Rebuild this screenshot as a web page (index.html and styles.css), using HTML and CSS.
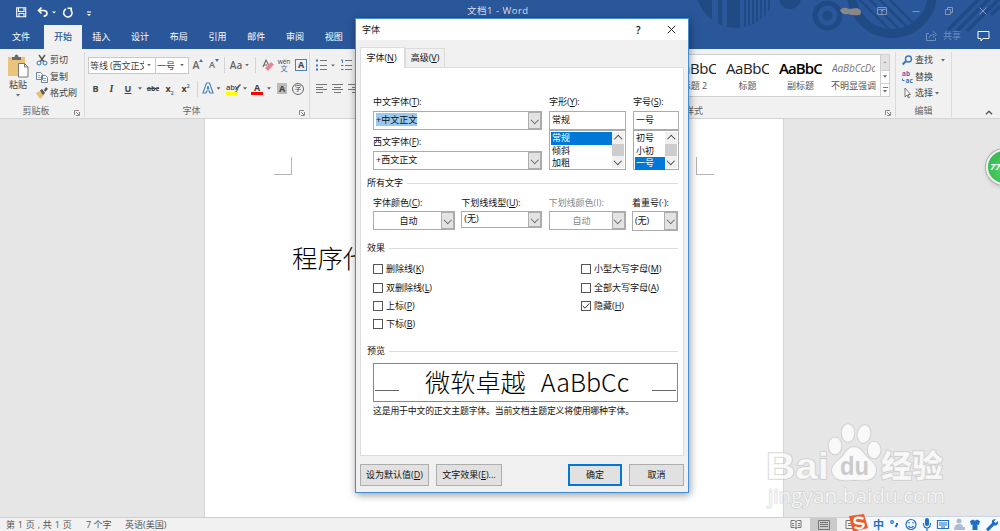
FILE: index.html
```html
<!DOCTYPE html>
<html lang="zh-CN">
<head>
<meta charset="utf-8">
<title>文档1 - Word</title>
<link rel="stylesheet" href="styles.css">
</head>
<body>
<div class="app">
  <header class="header">
    <svg class="pattern" width="320" height="49" viewBox="680 0 320 49">
      <defs>
        <clipPath id="disc"><circle cx="736" cy="-12" r="40"/></clipPath>
        <clipPath id="dial"><circle cx="892" cy="-7" r="36"/></clipPath>
      </defs>
      <g fill="#204a84" clip-path="url(#disc)">
        <rect x="696" width="16" height="40"/><rect x="718" width="4" height="40"/><rect x="727" width="13" height="40"/><rect x="744" width="2" height="40"/><rect x="748" width="2" height="40"/><rect x="752" width="2" height="40"/><rect x="756" width="2" height="40"/><rect x="760" width="2" height="40"/><rect x="764" width="2" height="40"/><rect x="768" width="2" height="40"/>
      </g>
      <g fill="none" stroke="#204a84">
        <circle cx="790" cy="-2" r="11" fill="#204a84" stroke="none"/>
        <circle cx="827.500" cy="15.500" r="12.500" stroke-width="5"/>
        <circle cx="827.500" cy="15.500" r="5" fill="#204a84" stroke="none"/>
        <circle cx="892" cy="-7" r="40.500" stroke-width="9"/>
        <path clip-path="url(#dial)" d="M850-10l50 50M858-12l50 50M866-14l50 50M874-16l50 50" stroke-width="2.500"/>
        <path d="M948 30L980-2M957 31L990-2M967 31L1000-2M991 15L1000 6" stroke-width="3.500"/>
      </g>
    </svg>
    <div class="titlebar">
      <svg class="qat" width="80" height="22" viewBox="0 0 80 22" fill="none" stroke="#fff" stroke-width="1.100">
        <path d="M.700 7.700h9v9h-9zM2.500 8v3.500h5.500V8M3 16.500v-3h5v3"/>
        <path d="M25.500 7.500l-3 3 3 3M23 10.500h4.500q3.500 0 3.500 2.800t-3.500 3" stroke-width="1.600"/>
        <path d="M36 11.500h4l-2 2zM71 14h4l-2 2z" fill="#fff" stroke="none"/>
        <path d="M50 9a4.200 4.200 0 1 0 4.500.5M51.500 8.200h4.500M55.300 7.500v4" stroke-width="1.500"/>
        <path d="M71 12h4"/>
      </svg>
      <div class="doc-title">文档1 - Word</div>
      <svg class="window-tools" width="160" height="24" viewBox="840 0 160 24" fill="none" stroke="#8195b9">
        <path d="M840 10q4-4 9-1l8-1q6 2 3 7-7 1-12-1-7 1-8-4z" fill="#8b8787" stroke="none"/>
        <path d="M877.500 7.500h9v7h-9zM877.500 9.500h9M882 14v-4M880.500 11.500l1.500-1.500 1.500 1.500"/>
        <path d="M912.500 11.500h7M945.500 9.500h5v5h-5zM947.500 9V7.500h5v5H951M979.500 7.500l7 7M986.500 7.500l-7 7"/>
      </svg>
    </div>
    <nav class="tabs">
      <span class="tab first">文件</span><span class="tab active">开始</span><span class="tab">插入</span><span class="tab">设计</span><span class="tab">布局</span><span class="tab">引用</span><span class="tab">邮件</span><span class="tab">审阅</span><span class="tab">视图</span>
      <div class="share">
        <svg width="12" height="12" viewBox="0 0 12 12" fill="none" stroke="#6f8fc0"><path d="M3 3.500H.5v7h9V8M3 8q.5-3.500 5-3.500M7 1.500l3.500 3L7 7.500"/></svg>
        <span>共享</span>
        <svg class="comment" width="13" height="12" viewBox="0 0 13 12" fill="none" stroke="#fff"><path d="M1 1.500h11v7H6L4 11V8.500H1z"/></svg>
      </div>
    </nav>
  </header>

  <section class="ribbon">
    <div class="group clipboard">
      <div class="group-main">
        <div class="paste">
          <svg width="22" height="24" viewBox="0 0 22 24"><path d="M1 3h17v19H1z" fill="#ecc37b"/><path d="M5 3h2.500q0-2.500 2-2.500t2 2.500H14v3H5z" fill="#6a6a6a"/><path d="M11.500 9.500h6l3.500 3.500v10h-9.500z" fill="#fff" stroke="#777"/><path d="M17.500 9.500V13H21" fill="none" stroke="#777"/></svg>
          <span>粘贴</span><i class="caret"></i>
        </div>
        <div class="commands">
          <div class="command"><svg width="12" height="12" viewBox="0 0 12 12" fill="none"><path d="M3 1l5 7M9 1L4 8" stroke="#555" stroke-width="1.400"/><circle cx="3" cy="9" r="2" stroke="#3876b5"/><circle cx="9" cy="9" r="2" stroke="#3876b5"/></svg>剪切</div>
          <div class="command"><svg width="12" height="12" viewBox="0 0 12 12" fill="#fff" stroke="#6884a2"><path d="M.500 1.500h4l2 2v5h-6zM5.500 4.500h4l2 2v5h-6z"/><path d="M2 4.500h2M2 6.500h3M7 7.500h3M7 9.500h3" stroke-width=".7"/></svg>复制</div>
          <div class="command"><svg width="12" height="12" viewBox="0 0 12 12"><path d="M0 6l4-2 4 4-4 4z" fill="#e9bd72"/><path d="M4 3.500l2-1.500 3 4-2 2zM8 3l2-3 2 2-3 3z" fill="#555"/></svg>格式刷</div>
        </div>
      </div>
      <div class="group-label">剪贴板<svg class="launcher" width="6" height="6" viewBox="0 0 6 6" fill="none" stroke="#888"><path d="M.5 5V.5H5M2 2l3 3M5.500 2v3.500H2"/></svg></div>
    </div>

    <div class="group font-group">
      <div class="group-main stacked">
        <div class="tool-row row-one">
          <div class="select"><span>等线 (西文正文)</span><i class="caret"></i></div>
          <div class="select"><span>一号</span><i class="caret"></i></div>
          <b class="glyph grow">A<svg width="4" height="3"><path d="M0 3l2-3 2 3z" fill="#3876b5"/></svg></b>
          <b class="glyph shrink">A<svg width="4" height="3"><path d="M0 0h4L2 3z" fill="#3876b5"/></svg></b>
          <i class="rule"></i><span class="glyph case">Aa</span><i class="caret"></i><i class="rule"></i>
          <svg width="12" height="12" viewBox="0 0 12 12"><path d="M1 8l3-7 2.500 5M2 6h3" fill="none" stroke="#666" stroke-width="1.100"/><path d="M3 9l6-6 3 2.500L6 12z" fill="#e8849a"/></svg>
          <span class="pinyin">wén<em>文</em></span>
          <b class="boxed">A</b>
        </div>
        <div class="tool-row row-two">
          <b class="glyph">B</b><b class="glyph italic">I</b><b class="glyph under">U</b><i class="caret"></i><b class="glyph strike">abc</b>
          <b class="glyph">x<sub>2</sub></b><b class="glyph">x<sup>2</sup></b><i class="rule"></i>
          <svg width="12" height="13" viewBox="0 0 12 13" fill="#fff" stroke="#4c81bb" stroke-width="1.200"><path d="M1 11L4.500 1h3L11 11H8L7.500 9h-3L4 11zM5.300 7h1.500L6 4z"/></svg><i class="caret"></i>
          <span class="mark">aby<svg width="8" height="8" viewBox="0 0 8 8"><path d="M1 7l1-2 4-4 1 1-4 4z" fill="#555"/></svg></span><i class="caret"></i>
          <b class="color-a">A</b><i class="caret"></i><b class="shaded">A</b><span class="circled">字</span>
        </div>
      </div>
      <div class="group-label">字体<svg class="launcher" width="6" height="6" viewBox="0 0 6 6" fill="none" stroke="#888"><path d="M.5 5V.5H5M2 2l3 3M5.500 2v3.500H2"/></svg></div>
    </div>

    <div class="group paragraph">
      <svg width="46" height="48" viewBox="310 52 46 48" fill="none" stroke="#777">
        <path d="M320 60.500h7M320 65.500h7M320 69.500h7M345 60.500h7M345 65.500h7M345 69.500h7"/>
        <path d="M316 60.500h2M316 65.500h2M316 69.500h2" stroke="#3876b5" stroke-width="2"/>
        <path d="M341 60h1.500v3M341 65.500h2.500M341 69.500h2.500" stroke="#3876b5"/>
        <path d="M331 64.500h4l-2 2z" fill="#666" stroke="none"/>
        <path d="M316 84.500h11M316 87.500h7M316 89.500h11M316 92.500h7M332 84.500h11M334 87.500h7M332 89.500h11M334 92.500h7M348 84.500h11M352 87.500h7M348 89.500h11M352 92.500h7"/>
      </svg>
    </div>

    <div class="group styles">
      <div class="gallery">
        <div class="style-item"><span>AaBbC</span><small>标题 2</small></div>
        <div class="style-item"><span>AaBbC</span><small>标题</small></div>
        <div class="style-item strong"><span>AaBbC</span><small>副标题</small></div>
        <div class="style-item subtle"><span>AaBbCcDd</span><small>不明显强调</small></div>
        <div class="gallery-scroll"><i class="caret up"></i><i class="caret"></i><div class="more"><i class="caret"></i></div></div>
      </div>
      <div class="group-label">样式<svg class="launcher" width="6" height="6" viewBox="0 0 6 6" fill="none" stroke="#888"><path d="M.5 5V.5H5M2 2l3 3M5.500 2v3.500H2"/></svg></div>
    </div>

    <div class="group editing">
      <div class="commands">
        <div class="command"><svg width="11" height="11" viewBox="0 0 11 11" fill="none" stroke="#3876b5"><circle cx="6.500" cy="4" r="3" stroke-width="1.400"/><path d="M4 6L.7 9.500" stroke-width="2"/></svg>查找<i class="caret wide"></i></div>
        <div class="command"><svg class="replace" width="11" height="14" viewBox="0 0 11 14"><text x="0" y="6" fill="#8a54a8">ab</text><text x="3.500" y="12.500" fill="#3876b5">ac</text><path d="M.5 8.500v2h2" fill="none" stroke="#3876b5"/></svg>替换</div>
        <div class="command"><svg width="11" height="12" viewBox="0 0 11 12" fill="#fff" stroke="#777"><path d="M3 1v9l2-2 1.500 3 1-.5L6 7.500h2.500z"/></svg>选择<i class="caret"></i></div>
      </div>
      <div class="group-label">编辑</div>
    </div>
    <svg class="collapse" width="8" height="5" viewBox="0 0 8 5" fill="none" stroke="#555" stroke-width="1.400"><path d="M1 4.200l3-3 3 3"/></svg>
  </section>

  <main class="workspace">
    <article class="page">
      <div class="corners"><i class="corner left"></i><i class="corner right"></i></div>
      <p class="body-text">程序代</p>
    </article>
  </main>

  <footer class="status">
    <span class="pages">第 1 页 , 共 1 页</span><span class="words">7 个字</span><span>英语(美国)</span>
    <div class="views">
      <svg width="12" height="9" viewBox="0 0 12 9" fill="none" stroke="#777"><path d="M1 .5h3.500L6 1.500 7.500.5H11v7H7.500L6 8.500 4.500 7.500H1zM6 1v8M2 3.500h2M2 5.500h2M8 3.500h2M8 5.500h2"/></svg>
      <span class="view-on"><svg width="12" height="10" viewBox="0 0 12 10" fill="none" stroke="#777"><path d="M.5.500h11v9H.500zM2 2.500h8M2 4.500h8M2 6.500h8"/></svg></span>
      <svg width="12" height="9" viewBox="0 0 12 9" fill="none" stroke="#777"><path d="M1 .5h10v8H1zM3 3.500h5M3 5.500h5"/></svg>
    </div>
  </footer>
</div>

<svg class="watermark" width="190" height="96" viewBox="760 418 190 96">
  <g fill="#fff" fill-opacity=".75" stroke="#bdbdbd" stroke-opacity=".6" stroke-width="1.600" paint-order="stroke">
    <text x="766" y="479" font-size="37" font-weight="700" textLength="63" lengthAdjust="spacingAndGlyphs">Bai</text>
    <ellipse cx="835" cy="446" rx="6.500" ry="8.500"/><ellipse cx="848" cy="433" rx="6.500" ry="9"/><ellipse cx="864" cy="434" rx="6.500" ry="9" transform="rotate(12 864 434)"/><ellipse cx="874" cy="450" rx="6.500" ry="8.500"/>
    <path d="M854 447c7 0 9 6 14 11 5 4 9 8 8 14-2 9-11 9-22 8-11 1-20 1-22-8-1-6 4-10 9-14 5-5 6-11 13-11z"/>
    <text x="881" y="477" font-size="31" font-weight="900" textLength="62">经验</text>
    <text class="site" x="768" y="503" font-size="20" textLength="177" lengthAdjust="spacingAndGlyphs" stroke-width="1.200">jingyan.baidu.com</text>
  </g>
  <text x="840" y="475" font-size="25" font-weight="700" fill="#cbcbcb" textLength="29" lengthAdjust="spacingAndGlyphs">du</text>
</svg>

<div class="ime">
  <svg width="152" height="17" viewBox="848 514 152 17">
    <path d="M860 516.500h140v15H852z" fill="#f6faff"/><path d="M866 516.500h134" stroke="#c9d5e2"/>
    <path d="M849 516l15-2 4 14-15 4z" fill="#f05a28"/><path d="M863.500 518.500q-8-2-9 1.500t5.500 3.500 1.500 4.500q-3 1.500-7-1" fill="none" stroke="#fff" stroke-width="2.400"/>
    <text x="873" y="528.500" font-size="11" font-weight="700" fill="#1d70c8">中</text>
    <g fill="none" stroke="#1d70c8" stroke-width="1.200">
      <circle cx="892" cy="522" r="1.300"/><path d="M897 523v1.500l-1.500 2.500" stroke-width="2"/>
      <circle cx="911" cy="524.500" r="5"/><path d="M909 522v1.500M913 522v1.500M908.500 526q2.500 3 5 0"/>
      <path d="M923.500 523q0 5 3.500 5t3.500-5M927 528v3"/>
      <path d="M937.500 520.500h11v8h-11zM939 523h8M939 525h8M941 527h4"/>
    </g>
    <g fill="#1d70c8"><rect x="925" y="518" width="4" height="8" rx="2"/><path d="M970 521l3-1.500q2 2 4 0l3 1.500-1 4-1.500-.5v5.500h-5v-5.500l-1.500.5zM986 529l6-6q-1-4 4-4l-2 2.500 1.500 1.500 2.500-2q.5 5-4 4.500l-6 6z"/></g>
    <g fill="#aebcd2"><circle cx="959" cy="521" r="2.500"/><path d="M954 530q0-6 5-6 4 0 4 3h2v3z"/></g>
  </svg>
</div>
<div class="ball">77</div>

<div class="dialog">
  <div class="dialog-title"><span>字体</span><b>?</b><svg width="9" height="9" viewBox="0 0 9 9" stroke="#222"><path d="M.8.8l7.400 7.400M8.200.8L.8 8.200"/></svg></div>
  <div class="dialog-tabs"><span class="dtab on">字体(<u>N</u>)</span><span class="dtab">高级(<u>V</u>)</span></div>
  <div class="panel">
    <div class="font-fields">
      <div class="families">
        <label>中文字体(<u>T</u>):</label>
        <div class="combo"><span class="selected">+中文正文</span><i class="drop"></i></div>
        <label class="second">西文字体(<u>F</u>):</label>
        <div class="combo"><span>+西文正文</span><i class="drop"></i></div>
      </div>
      <div class="picker">
        <label>字形(<u>Y</u>):</label>
        <div class="combo">常规</div>
        <div class="list"><ul><li class="hit">常规</li><li>倾斜</li><li>加粗</li></ul><div class="scroll"><i class="arrow up"></i><i class="thumb"></i><i class="arrow"></i></div></div>
      </div>
      <div class="picker">
        <label>字号(<u>S</u>):</label>
        <div class="combo">一号</div>
        <div class="list"><ul><li>初号</li><li>小初</li><li class="hit">一号</li></ul><div class="scroll"><i class="arrow up"></i><i class="thumb"></i><i class="arrow"></i></div></div>
      </div>
    </div>
    <div class="section">所有文字</div>
    <div class="text-fields">
      <div><label>字体颜色(<u>C</u>):</label><div class="combo centered"><span>自动</span><i class="drop"></i></div></div>
      <div><label>下划线线型(<u>U</u>):</label><div class="combo short"><span>(无)</span><i class="drop"></i></div></div>
      <div class="disabled"><label>下划线颜色(I):</label><div class="combo centered"><span>自动</span><i class="drop"></i></div></div>
      <div><label>着重号(·):</label><div class="combo tall"><span>(无)</span><i class="drop"></i></div></div>
    </div>
    <div class="section effects-title">效果</div>
    <div class="effects">
      <div><p><i class="check"></i>删除线(<u>K</u>)</p><p><i class="check"></i>双删除线(<u>L</u>)</p><p><i class="check"></i>上标(<u>P</u>)</p><p><i class="check"></i>下标(<u>B</u>)</p></div>
      <div><p><i class="check"></i>小型大写字母(<u>M</u>)</p><p><i class="check"></i>全部大写字母(<u>A</u>)</p><p><i class="check"><svg width="8" height="8" viewBox="0 0 8 8" fill="none" stroke="#333"><path d="M.8 4l2.200 2.200L7.300 1.500"/></svg></i>隐藏(<u>H</u>)</p></div>
    </div>
    <div class="section preview-title">预览</div>
    <div class="preview"><i></i><span class="sample">微软卓越</span><span class="sample latin">AaBbCc</span><i></i></div>
    <div class="hint">这是用于中文的正文主题字体。当前文档主题定义将使用哪种字体。</div>
  </div>
  <div class="buttons"><span class="btn default-btn">设为默认值(<u>D</u>)</span><span class="btn effect-btn">文字效果(<u>E</u>)...</span><span class="btn ok">确定</span><span class="btn cancel">取消</span></div>
</div>
</body>
</html>
```
FILE: styles.css
```css
* { box-sizing: border-box; }
body { margin: 0; width: 1000px; height: 531px; overflow: hidden; position: relative; font: 9px/12px "Open Sans", "Noto Sans CJK SC", sans-serif; color: #444; }
i, em { font-style: normal; }
svg { display: block; flex: none; }
p, ul { margin: 0; padding: 0; list-style: none; }
u { text-underline-offset: 1px; text-decoration-thickness: 1px; }
.app { display: flex; flex-direction: column; height: 531px; }

/* Title bar and ribbon tabs */
.header { position: relative; height: 49px; background: #2a579a; color: #fff; flex: none; }
.pattern { position: absolute; right: 0; top: 0; }
.titlebar { height: 25px; display: flex; position: relative; }
.qat { margin-left: 16px; }
.doc-title { margin-left: 371px; font-size: 9.5px; line-height: 21px; color: #d5deec; letter-spacing: .5px; white-space: nowrap; }
.window-tools { margin-left: auto; }
.tabs { display: flex; height: 24px; line-height: 23px; position: relative; }
.tab { width: 38.750px; text-align: center; }
.tab.first { width: 44px; padding-right: 2px; }
.tab.active { width: 38px; background: #f1f1f1; color: #2a579a; font-weight: 500; }
.share { margin-left: auto; display: flex; align-items: center; gap: 5px; color: #6f8fc0; padding-right: 10px; line-height: 20px; padding-bottom: 3px; }
.comment { margin-left: 11px; }

/* Ribbon */
.ribbon { height: 70px; flex: none; display: flex; background: #f1f1f1; border-bottom: 1px solid #d2d2d2; padding-top: 3px; }
.group { display: flex; flex-direction: column; position: relative; border-right: 1px solid #dadada; height: 65px; flex: none; }
.group-main { display: flex; height: 52px; }
.group-label { position: relative; height: 12px; margin-top: auto; text-align: center; color: #666; }
.launcher { position: absolute; right: 4px; bottom: 1px; }
.caret { width: 4px; height: 2.500px; background: #666; clip-path: polygon(0 0, 100% 0, 50% 100%); display: inline-block; flex: none; justify-self: center; align-self: center; }
.clipboard { width: 85px; }
.clipboard .group-label { padding-right: 12px; }
.paste { width: 36px; padding-top: 2px; display: flex; flex-direction: column; align-items: center; }
.paste span { line-height: 13px; }
.paste .caret { margin-top: 3px; }
.command { display: flex; align-items: center; height: 16.500px; gap: 2px; white-space: nowrap; }
.font-group { width: 225px; padding-left: 3px; }
.font-group .group-label { padding-right: 14px; }
.stacked { flex-direction: column; }
.tool-row { display: grid; align-items: center; justify-items: center; height: 23px; }
.row-one { height: 26px; grid-template-columns: 68px 33px 18px 14px 6px 18px 4px 13px 11px 22px 12px; }
.row-two { height: 21px; grid-template-columns: 15px 17px 16px 8px 18px 15px 17px 6px 16px 5px 22px 4px 20px 4px 22px 10px; }
.select { width: 100%; height: 17px; border: 1px solid #c8c8c8; background: #fff; display: flex; justify-content: space-between; padding: 0 4px 0 1px; line-height: 15px; }
.select span { white-space: nowrap; overflow: hidden; flex: 1; margin-right: 3px; letter-spacing: -.1px; }
.select + .select { border-left: 0; }
.select + .select span { letter-spacing: 0; }
.glyph { font-size: 9px; line-height: 12px; white-space: nowrap; }
.grow, .shrink { display: flex; font-size: 10.500px; font-weight: 600; color: #666; }
.shrink { font-size: 9px; }
.case { font-size: 10px; font-weight: 600; color: #666; }
.italic { font-style: italic; font-family: "Liberation Serif", serif; font-size: 10px; }
.under { text-decoration: underline; }
.strike { text-decoration: line-through; font-size: 7px; }
.glyph sub, .glyph sup { font-size: 5px; line-height: 0; color: #3876b5; }
.rule { width: 1px; height: 16px; background: #d4d4d4; }
.pinyin { font-size: 6.500px; line-height: 6px; text-align: center; display: grid; }
.pinyin em { color: #3876b5; font-size: 7px; line-height: 7px; }
.boxed { border: 1px solid #4c81bb; width: 12px; height: 12px; line-height: 10px; text-align: center; }
.mark { display: flex; font-size: 7.500px; font-weight: 600; line-height: 9px; height: 12px; width: 12px; border-bottom: 3px solid #ff0; }
.mark svg { margin-left: -5px; }
.color-a { line-height: 10px; height: 12px; width: 12px; text-align: center; border-bottom: 3px solid #f00; }
.shaded { width: 10px; height: 11px; background: #bbb; line-height: 11px; text-align: center; }
.circled { width: 12px; height: 12px; border: 1px solid #666; border-radius: 50%; font-size: 7px; line-height: 10px; text-align: center; }
.paragraph { width: 340px; }
.styles { width: 246px; }
.styles .group-label { width: 100%; text-align: right; padding-right: 192px; }
.gallery { display: flex; height: 43px; margin: 2px 5px 0 17px; background: #fff; border: 1px solid #cfcfcf; border-right: 0; }
.style-item { width: 53px; display: flex; flex-direction: column; align-items: center; padding-top: 3px; flex: none; }
.style-item span { width: 43px; overflow: hidden; white-space: nowrap; font: 15px/20px "Open Sans", sans-serif; letter-spacing: -.4px; color: #222; height: 21px; }
.style-item.strong span { font-weight: 600; color: #000; letter-spacing: -.900px; }
.style-item.subtle span { font-size: 10px; font-style: italic; color: #777; letter-spacing: -.1px; }
.style-item small { font-size: 9px; line-height: 14px; color: #555; }
.gallery-scroll { width: 11px; display: grid; grid-template-rows: 15px 13px 13px; border: 1px solid #cfcfcf; border-width: 0 1px; margin-left: auto; background: linear-gradient(#e2e2e2 15px, #cfcfcf 15px 16px, #fff 16px 28px, #cfcfcf 28px 29px, #fff 29px); }
.caret.up { transform: rotate(180deg); opacity: .4; }
.more { display: flex; flex-direction: column; align-items: center; padding-top: 4px; }
.more::before { content: ""; width: 5px; height: 1px; background: #777; margin-bottom: 2px; }
.more .caret { align-self: center; }
.editing { width: 56px; padding-left: 6px; }
.caret.wide { margin-left: 6px; }
.editing .group-label { margin-right: 6px; }
.replace { font: 700 6.500px "Open Sans", sans-serif; }
.collapse { margin: 58px 0 0 33px; }

/* Document */
.workspace { flex: 1; background: #e6e6e6; display: flex; }
.page { margin-left: 204px; width: 580px; background: #fff; border: 1px solid #d5d5d5; border-width: 0 1px; padding: 38px 69px 0 69px; }
.corners { display: flex; justify-content: space-between; }
.corner { width: 18px; height: 18px; border-bottom: 1px solid #b5b5b5; }
.corner.left { border-right: 1px solid #b5b5b5; }
.corner.right { border-left: 1px solid #b5b5b5; }
.body-text { font: 300 25.400px/36px "Noto Sans CJK SC", sans-serif; color: #000; margin: 64px 0 0 18px; }
.status { height: 14px; flex: none; background: #f1f1f1; border-top: 1px solid #cfcfcf; display: flex; padding-left: 6px; line-height: 14px; white-space: nowrap; color: #555; }
.pages { width: 80px; word-spacing: .5px; }
.words { width: 39px; }
.views { margin-left: auto; display: flex; width: 210px; align-items: center; }
.view-on { width: 27px; height: 14px; margin: 0 8px; background: #cacaca; display: grid; place-items: center; }

/* Floating overlays */
.watermark { position: absolute; left: 760px; top: 418px; font-family: "Liberation Sans", "Noto Sans CJK SC", sans-serif; }
.site { font-family: "Open Sans", sans-serif; }
.ime { position: absolute; left: 848px; top: 514px; font-family: "Noto Sans CJK SC", sans-serif; }
.ball { position: absolute; left: 986px; top: 149px; width: 36px; height: 36px; border-radius: 50%; border: 2px solid #eee; background: radial-gradient(circle at 50% 60%, #4fd264, #31b14b); box-shadow: 0 0 0 1px #aaa, 0 2px 4px #8886; color: #fff; font-size: 9.500px; font-weight: 700; font-style: italic; line-height: 31px; padding-left: 2px; }

/* Font dialog */
.dialog { position: absolute; left: 355px; top: 18px; width: 334px; height: 475px; background: #f0f0f0; border: 1px solid #3f8ed6; box-shadow: 1px 2px 8px #0006; color: #111; display: flex; flex-direction: column; padding: 0 4px; }
.dialog-title { height: 21px; flex: none; background: #fff; margin: 0 -4px; display: flex; align-items: center; padding: 0 12px 0 6px; }
.dialog-title b { margin-left: auto; font-size: 10px; font-weight: 600; width: 31px; }
.dialog-tabs { height: 27px; flex: none; padding-top: 7px; display: flex; align-items: flex-end; }
.dtab { width: 40px; height: 19px; border: 1px solid #dcdcdc; border-bottom: 0; line-height: 18px; text-align: center; }
.dtab.on { width: 45px; height: 21px; background: #fff; margin-bottom: -1px; z-index: 1; line-height: 19px; padding-right: 2px; }
.panel { width: 324px; height: 389px; flex: none; border: 1px solid #dcdcdc; background: #fff; padding: 28px 5px 0 6px; }
.font-fields { display: grid; grid-template-columns: 169px 77px 46px; gap: 7px; padding-left: 6px; }
label { display: block; height: 15px; line-height: 12px; white-space: nowrap; }
.combo { border: 1px solid #ababab; background: #fff; height: 19px; line-height: 16px; padding-left: 2px; display: flex; }
.selected { background: #99c9ef; height: 13px; line-height: 13px; margin-top: 1px; }
.drop { width: 13px; background: #e3e3e3; border: 1px solid #adadad; margin-left: auto; display: grid; place-items: center; }
.drop::after, .arrow::after { content: ""; width: 4.500px; height: 4.500px; border: solid #666; border-width: 0 1px 1px 0; transform: translateY(-1px) rotate(45deg); }
.arrow::after { border-color: #444; }
.second { height: 15px; margin-top: 6px; }
.list { height: 40px; border: 1px solid #ababab; display: flex; justify-content: space-between; padding: 1px; }
.list ul { flex: 1; }
.list li { height: 12.500px; line-height: 11px; padding-left: 1px; }
.list .hit { background: #0078d7; color: #fff; }
.scroll { width: 12px; background: #f0f0f0; display: grid; grid-template-rows: 12px 12px 12px; }
.arrow { display: grid; place-items: center; }
.arrow.up { transform: rotate(180deg); }
.thumb { background: #cdcdcd; }
.section { display: flex; align-items: center; gap: 4px; height: 12px; margin-top: 7px; white-space: nowrap; }
.section::after { content: ""; height: 1px; flex: 1; background: #dcdcdc; }
.text-fields { display: grid; grid-template-columns: 82px 81px 77px 46px; column-gap: 6.300px; padding-left: 6px; margin-top: 8px; height: 37px; }
.text-fields label { height: 14px; }
.combo.centered span { flex: 1; text-align: center; }
.combo.centered { line-height: 17px; }
.combo.short { height: 17px; line-height: 14px; }
.combo.tall { height: 20px; line-height: 18px; }
.disabled { color: #888; }
.effects-title { margin-top: 8px; }
.effects { display: grid; grid-template-columns: 208px 1fr; padding: 6px 0 0 6px; height: 85px; }
.effects p { height: 18.400px; display: flex; align-items: center; }
.check { width: 10px; height: 10px; border: 1px solid #555; margin-right: 3px; flex: none; }
.preview-title { margin-top: 6px; }
.preview { height: 39px; margin: 6px 0 0 6px; border: 1px solid #888; display: flex; padding: 0 1px; font: 300 25.200px/34px "Noto Sans CJK SC", sans-serif; color: #000; white-space: nowrap; }
.preview i { width: 24px; height: 27px; border-bottom: 1px solid #666; flex: none; }
.preview i:last-child { margin-left: auto; }
.sample { margin-left: 26px; }
.sample.latin { margin-left: 15px; font-size: 25px; }
.hint { margin: 3px 0 0 6px; white-space: nowrap; font-size: 8.900px; letter-spacing: -.18px; }
.buttons { display: flex; margin-top: 8px; height: 22px; }
.btn { border: 1px solid #adadad; background: #e1e1e1; height: 22px; line-height: 20px; text-align: center; white-space: nowrap; flex: none; }
.default-btn { width: 69px; }
.effect-btn { width: 66px; margin-left: 7px; }
.ok { width: 54px; margin-left: 66px; border: 2px solid #0078d7; line-height: 18px; }
.cancel { width: 55px; margin-left: 7px; }
```
